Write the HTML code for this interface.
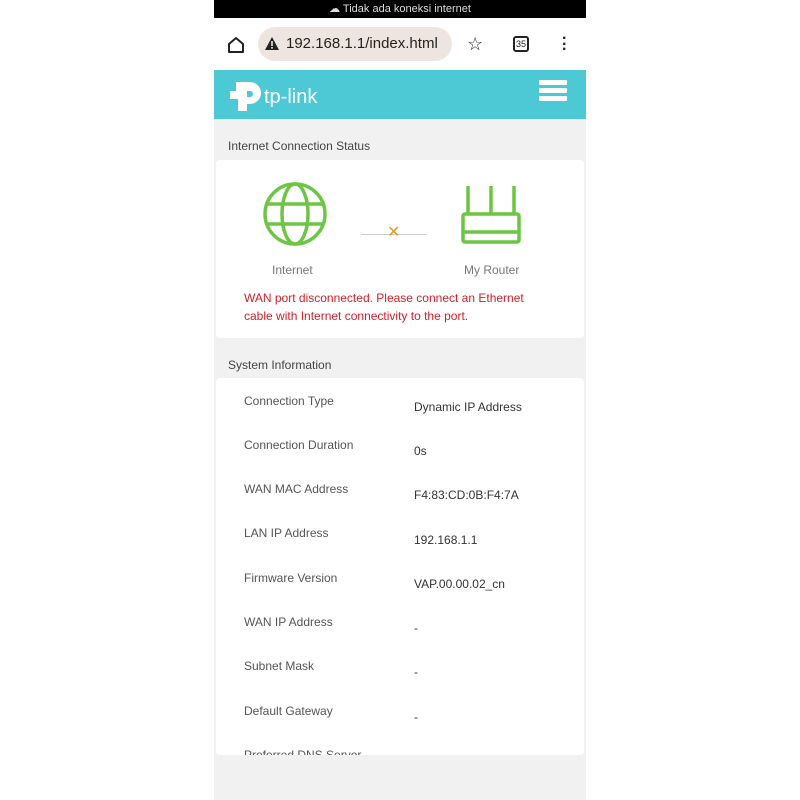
<!DOCTYPE html>
<html><head><meta charset="utf-8"><style>
*{margin:0;padding:0;box-sizing:border-box}
body{width:800px;height:800px;background:#fff;position:relative;font-family:"Liberation Sans",sans-serif;overflow:hidden}
#ph{position:absolute;left:214px;top:0;width:372px;height:800px;background:#f1f1f1;overflow:hidden}
.a{position:absolute;white-space:nowrap}
.lab{position:absolute;left:28px;font-size:12px;color:#555}
.val{position:absolute;left:198px;font-size:12px;color:#333}
</style></head><body>
<div id="ph">
<div class="a" style="left:0;top:0;width:372px;height:18px;background:#000;color:#ddd;font-size:11px;text-align:center;line-height:18px">☁ Tidak ada koneksi internet</div>
<div class="a" style="left:0;top:18px;width:372px;height:52px;background:#fff"></div>
<svg class="a" style="left:12px;top:35px" width="20" height="20" viewBox="0 0 20 20"><path d="M3 9 L10 3 L17 9 V17 H3 Z" fill="none" stroke="#222" stroke-width="2" stroke-linejoin="round"/></svg>
<div class="a" style="left:44px;top:27px;width:194px;height:34px;border-radius:17px;background:#efe5e0"></div>
<svg class="a" style="left:50px;top:36px" width="16" height="15" viewBox="0 0 16 15"><path d="M8 1 L15 14 H1 Z" fill="#222"/><rect x="7.2" y="5" width="1.6" height="5" fill="#efe5e0"/><rect x="7.2" y="11" width="1.6" height="1.6" fill="#efe5e0"/></svg>
<div class="a" style="left:72px;top:35px;font-size:15px;color:#222">192.168.1.1/index.html</div>
<div class="a" style="left:253px;top:34px;font-size:18px;color:#222">☆</div>
<div class="a" style="left:299px;top:36px;width:16px;height:16px;border:2px solid #222;border-radius:3px;font-size:9px;text-align:center;line-height:12px;color:#222">35</div>
<div class="a" style="left:348px;top:36px;font-size:16px;font-weight:bold;line-height:5.5px;color:#222">·<br>·<br>·</div>
<div class="a" style="left:0;top:70px;width:372px;height:49px;background:#4dc9d6"></div>
<svg class="a" style="left:14px;top:78px" width="36" height="36" viewBox="0 0 36 36"><path d="M8 4 H22 A11 11 0 0 1 22 26 H19 V33 H10 V21 H2 V13 H8 Z M19 13 V19 H22 A3 3 0 0 0 22 13 Z" fill="#fff"/></svg>
<div class="a" style="left:50px;top:86px;font-size:20px;color:#fff">tp-link</div>
<div class="a" style="left:325px;top:80px;width:28px;height:5px;background:#fff;border-radius:1px"></div>
<div class="a" style="left:325px;top:88px;width:28px;height:5px;background:#fff;border-radius:1px"></div>
<div class="a" style="left:325px;top:96px;width:28px;height:5px;background:#fff;border-radius:1px"></div>
<div class="a" style="left:14px;top:139px;font-size:12px;color:#444">Internet Connection Status</div>
<div class="a" style="left:2px;top:160px;width:368px;height:178px;background:#fff;border-radius:4px"></div>
<svg class="a" style="left:48px;top:181px" width="66" height="66" viewBox="0 0 66 66" fill="none" stroke="#6cc644" stroke-width="3.5"><circle cx="33" cy="33" r="30"/><ellipse cx="33" cy="33" rx="13" ry="30"/><path d="M4 23 H62 M4 43 H62"/></svg>
<svg class="a" style="left:246px;top:186px" width="62" height="60" viewBox="0 0 62 60" fill="none" stroke="#6cc644" stroke-width="3.5"><path d="M8 0 V28 M31 0 V28 M54 0 V28"/><rect x="3" y="28" width="56" height="28" rx="2"/><path d="M3 46 H59"/></svg>
<div class="a" style="left:147px;top:234px;width:66px;height:1px;background:#ccc"></div>
<div class="a" style="left:173px;top:222px;font-size:16px;color:#e59a2a">✕</div>
<div class="a" style="left:58px;top:263px;font-size:12px;color:#777">Internet</div>
<div class="a" style="left:250px;top:263px;font-size:12px;color:#777">My Router</div>
<div class="a" style="left:30px;top:289px;font-size:12px;color:#d0202a;line-height:18px">WAN port disconnected. Please connect an Ethernet<br>cable with Internet connectivity to the port.</div>
<div class="a" style="left:14px;top:358px;font-size:12px;color:#444">System Information</div>
<div class="a" style="left:2px;top:378px;width:368px;height:377px;background:#fff;border-radius:4px;overflow:hidden">
<div class="lab" style="top:16px">Connection Type</div><div class="val" style="top:22px">Dynamic IP Address</div>
<div class="lab" style="top:60px">Connection Duration</div><div class="val" style="top:66px">0s</div>
<div class="lab" style="top:104px">WAN MAC Address</div><div class="val" style="top:110px">F4:83:CD:0B:F4:7A</div>
<div class="lab" style="top:148px">LAN IP Address</div><div class="val" style="top:155px">192.168.1.1</div>
<div class="lab" style="top:193px">Firmware Version</div><div class="val" style="top:199px">VAP.00.00.02_cn</div>
<div class="lab" style="top:237px">WAN IP Address</div><div class="val" style="top:243px">-</div>
<div class="lab" style="top:281px">Subnet Mask</div><div class="val" style="top:287px">-</div>
<div class="lab" style="top:326px">Default Gateway</div><div class="val" style="top:332px">-</div>
<div class="lab" style="top:370px">Preferred DNS Server</div>
</div>
</div>
</body></html>
